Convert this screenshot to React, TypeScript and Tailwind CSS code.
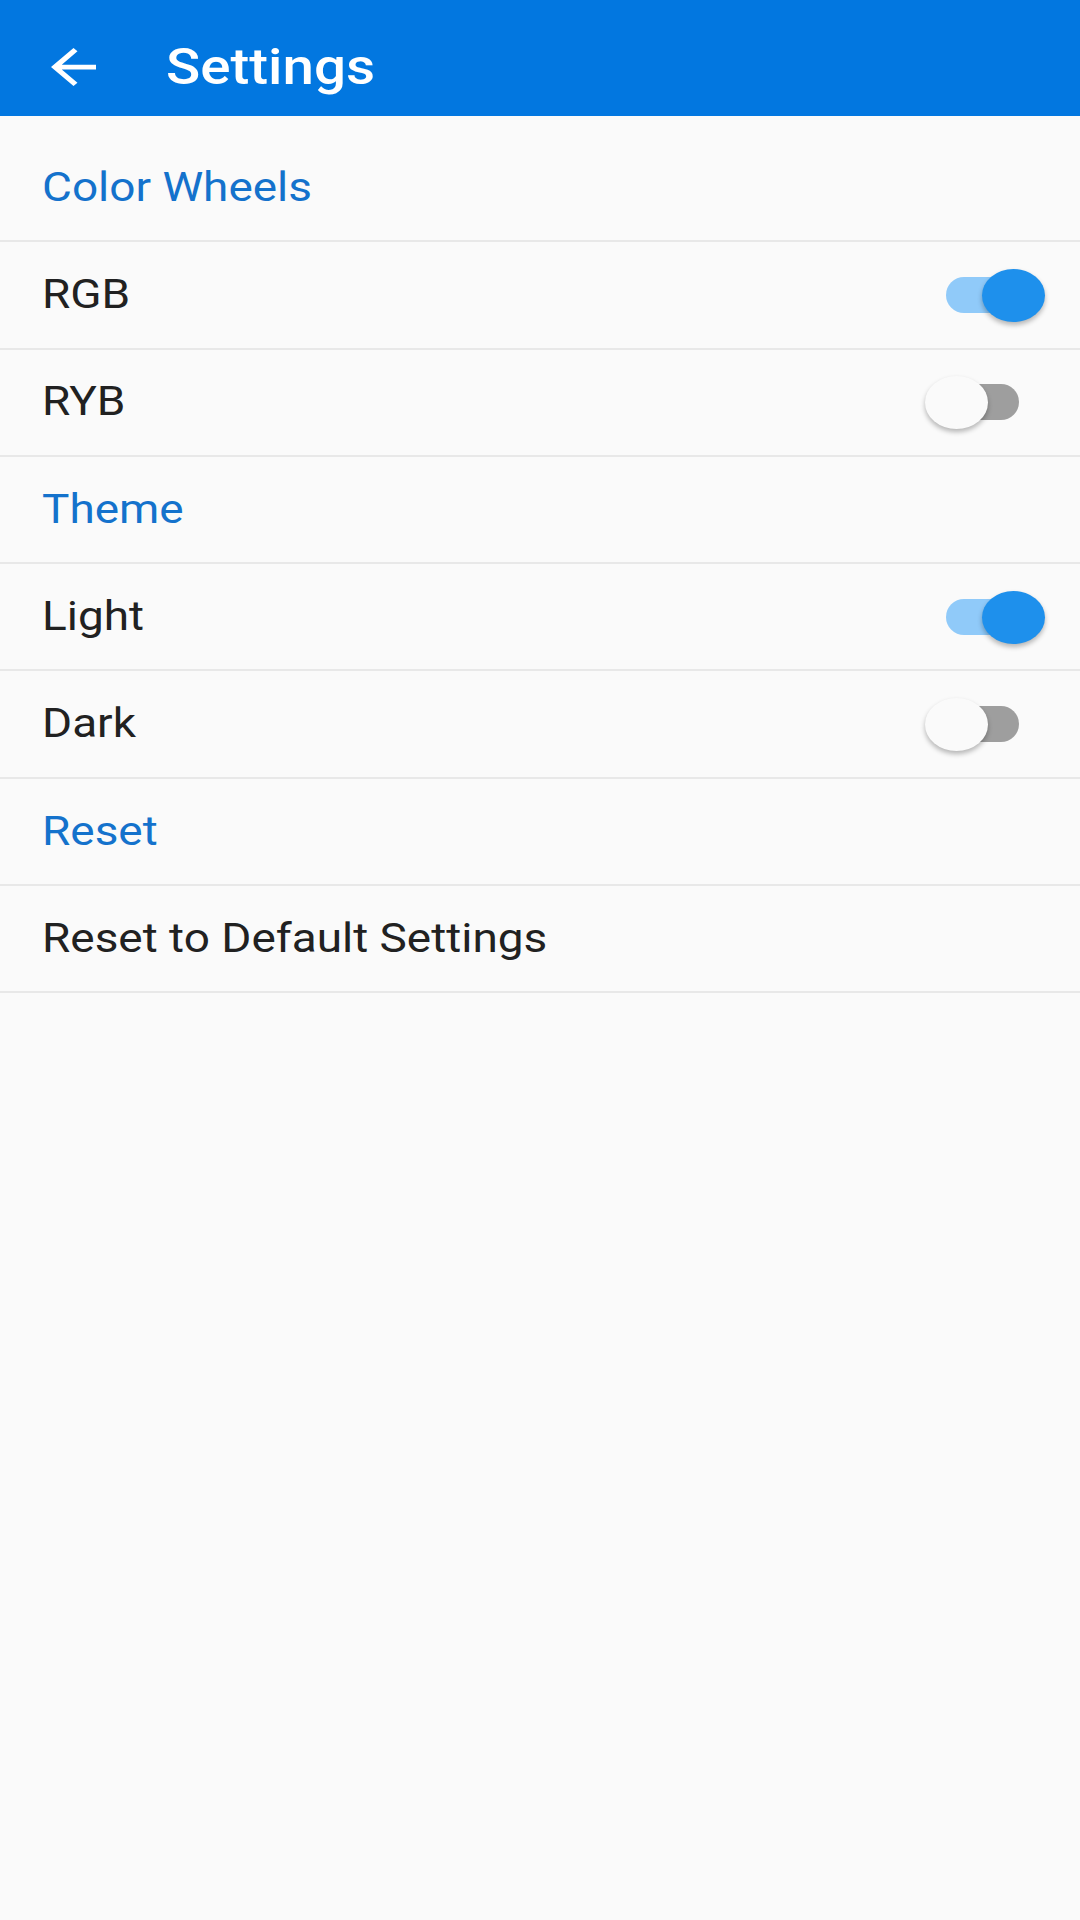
import React from 'react';

type Row =
  | { kind: 'section'; label: string }
  | { kind: 'toggle'; label: string; on: boolean }
  | { kind: 'action'; label: string };

const rows: Row[] = [
  { kind: 'section', label: 'Color Wheels' },
  { kind: 'toggle', label: 'RGB', on: true },
  { kind: 'toggle', label: 'RYB', on: false },
  { kind: 'section', label: 'Theme' },
  { kind: 'toggle', label: 'Light', on: true },
  { kind: 'toggle', label: 'Dark', on: false },
  { kind: 'section', label: 'Reset' },
  { kind: 'action', label: 'Reset to Default Settings' },
];

const Toggle = ({ on }: { on: boolean }) => (
  <div className={`relative w-[73px] h-[36px] rounded-full ${on ? 'bg-[#90CAF9]' : 'bg-[#9E9E9E]'}`}>
    <div
      className={`absolute top-[-8px] w-[63px] h-[53px] rounded-[50%] shadow-[0_3px_5px_rgba(0,0,0,0.28)] ${
        on ? 'left-[36px] bg-[#1E90EC]' : 'left-[-21px] bg-[#FAFAFA]'
      }`}
    />
  </div>
);

const App = () => {
  return (
    <div className="min-h-screen w-full bg-[#FAFAFA] font-['Roboto','Liberation_Sans',sans-serif]">
      <header className="h-[116px] bg-[#0277E0] pt-[18px] flex items-center pl-[51px]">
        <svg width="45" height="38" viewBox="4 4 16 16" preserveAspectRatio="none" className="shrink-0">
          <path
            d="M20 11H7.83l5.59-5.59L12 4l-8 8 8 8 1.41-1.41L7.83 13H20v-2z"
            fill="white"
          />
        </svg>
        <h1 className="ml-[70px] inline-block origin-left scale-x-[1.13] text-white text-[50px] font-medium">
          Settings
        </h1>
      </header>

      <div className="pt-[19px]">
        {rows.map((row) => (
          <div
            key={row.label}
            className="h-[107.3px] border-b-2 border-[#E8E8E8] flex items-center justify-between pl-[42px] pr-[61px]"
          >
            <span
              className={`inline-block origin-left scale-x-[1.12] text-[41px] ${
                row.kind === 'section' ? 'text-[#1472CC]' : 'text-[#212121]'
              }`}
            >
              {row.label}
            </span>
            {row.kind === 'toggle' && <Toggle on={row.on} />}
          </div>
        ))}
      </div>
    </div>
  );
};

export default App;
